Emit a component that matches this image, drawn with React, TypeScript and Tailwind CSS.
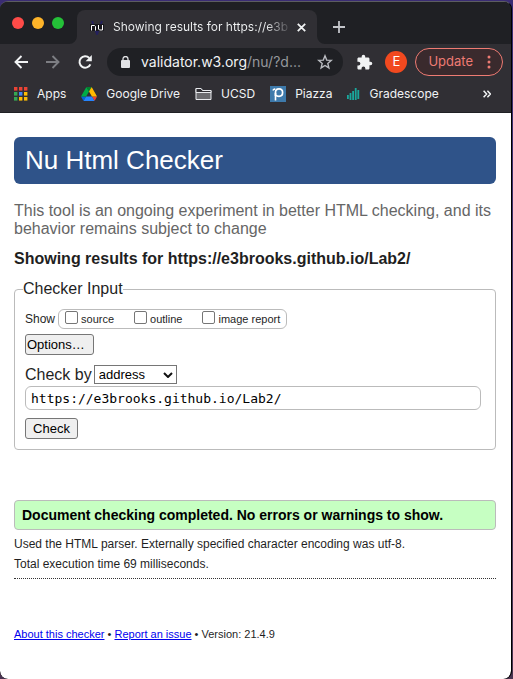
import React from "react";

const APP_COLORS = [
  "#ea4335", "#ea4335", "#ea4335",
  "#34a853", "#4285f4", "#fbbc04",
  "#34a853", "#fbbc04", "#fbbc04",
];

function AppsIcon() {
  return (
    <svg width="14" height="14" viewBox="0 0 14 14" aria-hidden="true">
      {APP_COLORS.map((color, i) => (
        <rect key={i} x={(i % 3) * 5} y={Math.floor(i / 3) * 5} width="3.400" height="3.600" fill={color} />
      ))}
    </svg>
  );
}

function DriveIcon() {
  return (
    <svg width="16" height="14" viewBox="0 0 87 78" aria-hidden="true">
      <path d="M6.6 66.9l3.9 6.6c.8 1.4 2 2.5 3.3 3.3L27.500 53H0c0 1.600.4 3.100 1.200 4.500z" fill="#0066da" />
      <path d="M43.700 25L29.900 1.200c-1.300.8-2.500 1.900-3.300 3.300L1.200 48.500A9 9 0 000 53h27.500z" fill="#00ac47" />
      <path d="M73.600 76.800c1.300-.8 2.500-1.900 3.300-3.300l9.100-15.900c.8-1.400 1.200-2.900 1.200-4.500H59.800l5.900 11.500z" fill="#ea4335" />
      <path d="M43.700 25L57.400 1.200C56.100.4 54.500 0 52.900 0H34.400c-1.600 0-3.200.4-4.500 1.200z" fill="#00832d" />
      <path d="M59.800 53H27.500L13.800 76.800c1.300.8 2.900 1.200 4.500 1.200h50.800c1.600 0 3.200-.4 4.500-1.200z" fill="#2684fc" />
      <path d="M73.400 26.500L60.700 4.500c-.8-1.400-2-2.500-3.300-3.300L43.700 25l16.100 28h27.400c0-1.600-.4-3.100-1.200-4.500z" fill="#ffba00" />
    </svg>
  );
}

function FolderIcon() {
  return (
    <svg width="17" height="14" viewBox="0 0 17 14" fill="none" stroke="#e8eaed" aria-hidden="true">
      <path d="M1 12.500V1.500h5l1.500 2H16v9z" fill="#6b6b6f" />
      <path d="M1 5.500V1.500h5l1.500 2H16v2z" fill="#302f34" />
    </svg>
  );
}

function PiazzaIcon() {
  return (
    <svg width="16" height="16" viewBox="0 0 16 16" fill="none" aria-hidden="true">
      <rect width="16" height="16" fill="#3e7aab" />
      <path d="M3 4.500c.3-1 1.200-1.600 2.200-1.200M5.500 7v7.500" stroke="#fff" strokeWidth="1.600" />
      <path d="M5.500 10V6.500C5.500 4 7 2.900 9 2.900s3.600 1.500 3.600 3.700S11.200 10.400 9 10.400c-1.500 0-2.700-.5-3.500-1.400" stroke="#fff" strokeWidth="1.700" />
    </svg>
  );
}

function GradescopeIcon() {
  return (
    <svg width="13" height="12" viewBox="0 0 13 12" fill="#1aa79c" aria-hidden="true">
      <rect x="0" y="7" width="1.800" height="4" />
      <rect x="2.600" y="5" width="1.800" height="7" />
      <rect x="5.200" y="3" width="1.800" height="9" />
      <rect x="7.800" y="0" width="1.800" height="12" />
      <rect x="10.400" y="2" width="1.800" height="9" />
    </svg>
  );
}

function NuIcon() {
  return (
    <svg width="16" height="16" viewBox="0 0 16 16" fill="none" aria-hidden="true">
      <path d="M3 2l5 13 5-13" stroke="#23205c" strokeWidth="2" />
      <rect x="1" y="5" width="14" height="7" fill="#17171d" />
      <path d="M2.500 11.500V6.500h3l1 1v4M9.500 6v4l1 1h3V6" stroke="#fff" strokeWidth="1" />
    </svg>
  );
}

function TabFoot({ flip }: { flip?: boolean }) {
  return (
    <svg width="8" height="8" viewBox="0 0 8 8" className={flip ? "-scale-x-100" : ""} aria-hidden="true">
      <path d="M8 0v8H0a8 8 0 008-8z" fill="#302f34" />
    </svg>
  );
}

function TabStrip() {
  return (
    <div className="flex h-[42px] items-end bg-[#1f2024] pl-3">
      <div className="mb-[15px] flex gap-2">
        <button aria-label="Close window" className="size-3 rounded-full bg-[#fe4b48]" />
        <button aria-label="Minimize window" className="size-3 rounded-full bg-[#feb429]" />
        <button aria-label="Zoom window" className="size-3 rounded-full bg-[#24c138]" />
      </div>
      <div className="ml-[5px] flex items-end">
        <TabFoot />
        <div className="flex h-[34px] w-[240px] items-center rounded-t-lg bg-[#302f34] pr-2 pl-3">
          <NuIcon />
          <span className="ml-2 flex-1 bg-linear-to-r from-[#f1f3f4] from-85% to-[#302f34] bg-clip-text text-xs whitespace-nowrap text-transparent">
            Showing results for https://e3b
          </span>
          <button aria-label="Close tab" className="flex size-4 items-center justify-center">
            <svg width="9" height="9" viewBox="0 0 9 9" stroke="#f1f3f4" strokeWidth="1.800" aria-hidden="true">
              <path d="M.8.8l7.400 7.400M8.200.8L.8 8.200" />
            </svg>
          </button>
        </div>
        <TabFoot flip />
      </div>
      <button aria-label="New tab" className="mb-[11px] ml-2 flex size-3 items-center justify-center">
        <svg width="12" height="12" viewBox="0 0 12 12" stroke="#c3c5ca" strokeWidth="1.800" aria-hidden="true">
          <path d="M6 0v12M0 6h12" />
        </svg>
      </button>
    </div>
  );
}

function Toolbar() {
  return (
    <div className="flex h-9 items-center pr-2 pl-[14px]">
      <button aria-label="Back">
        <svg width="14" height="14" viewBox="0 0 14 14" fill="none" stroke="#f1f3f4" strokeWidth="1.900" aria-hidden="true">
          <path d="M14 7H1.500M7.500 1L1.500 7l6 6" />
        </svg>
      </button>
      <button aria-label="Forward" className="ml-[18px]">
        <svg width="14" height="14" viewBox="0 0 14 14" fill="none" stroke="#7d7e83" strokeWidth="1.900" aria-hidden="true">
          <path d="M0 7h12.500M6.500 1l6 6-6 6" />
        </svg>
      </button>
      <button aria-label="Reload" className="ml-4">
        <svg width="18" height="18" viewBox="0 0 18 18" fill="none" aria-hidden="true">
          <path d="M14.400 11.300A5.700 5.700 0 1113.300 5" stroke="#f1f3f4" strokeWidth="2" />
          <path d="M15.800 2v6.200H9.600z" fill="#f1f3f4" />
        </svg>
      </button>
      <div className="ml-[13px] flex h-7 min-w-0 flex-1 items-center rounded-full bg-[#1f2024] pr-[10px] pl-[14px]">
        <svg width="9" height="12" viewBox="0 0 9 12" fill="none" aria-hidden="true">
          <rect x="0" y="4" width="9" height="8" rx="1" fill="#e2e3e6" />
          <path d="M2 5V3a2.500 2.500 0 015 0v2" stroke="#e2e3e6" strokeWidth="1.300" />
        </svg>
        <span className="ml-[11px] flex-1 text-sm whitespace-nowrap text-[#f1f3f4]">
          validator.w3.org<span className="text-[#96989d]">/nu/?d...</span>
        </span>
        <button aria-label="Bookmark this tab">
          <svg width="16" height="16" viewBox="0 0 16 16" fill="none" stroke="#b9bbc0" strokeWidth="1.400" aria-hidden="true">
            <path d="M8 1.800l1.700 4.300 4.600.3-3.500 3 1.100 4.500L8 11.500l-3.900 2.400 1.100-4.500-3.500-3 4.600-.3z" />
          </svg>
        </button>
      </div>
      <button aria-label="Extensions" className="ml-[13px]">
        <svg width="17" height="17" viewBox="0 0 24 24" fill="#f1f3f4" aria-hidden="true">
          <path d="M20.500 11H19V7c0-1.100-.9-2-2-2h-4V3.500a2.500 2.500 0 00-5 0V5H4c-1.100 0-2 .9-2 2v3.800h1.500a2.700 2.700 0 010 5.400H2V20c0 1.100.9 2 2 2h3.800v-1.500a2.700 2.700 0 015.400 0V22H17c1.100 0 2-.9 2-2v-4h1.500a2.500 2.500 0 000-5z" />
        </svg>
      </button>
      <button aria-label="Profile" className="ml-3 size-[22px] rounded-full bg-[#f1491f] text-[13px] text-white">
        E
      </button>
      <button className="ml-2 flex h-7 items-center rounded-full border border-[#ee7b73] bg-[#3a2a2d] pr-[11px] pl-3 text-[13px] text-[#ee7b73]">
        Update
        <svg width="4" height="14" viewBox="0 0 4 14" fill="#ee7b73" className="ml-[14px]" aria-hidden="true">
          <circle cx="2" cy="2" r="1.500" />
          <circle cx="2" cy="7" r="1.500" />
          <circle cx="2" cy="12" r="1.500" />
        </svg>
      </button>
    </div>
  );
}

function Bookmark({ icon, label }: { icon: React.ReactNode; label: string }) {
  return (
    <a href="#" className="flex items-center gap-[9px] whitespace-nowrap">
      {icon}
      {label}
    </a>
  );
}

function BookmarksBar() {
  return (
    <nav className="flex h-[33px] items-center gap-[15px] border-b border-[#1f2024] pr-5 pb-1 pl-[14px] text-xs text-[#f1f3f4]">
      <Bookmark icon={<AppsIcon />} label="Apps" />
      <Bookmark icon={<DriveIcon />} label="Google Drive" />
      <Bookmark icon={<FolderIcon />} label="UCSD" />
      <Bookmark icon={<PiazzaIcon />} label="Piazza" />
      <Bookmark icon={<GradescopeIcon />} label="Gradescope" />
      <button aria-label="More bookmarks" className="ml-auto">
        <svg width="8" height="8" viewBox="0 0 8 8" fill="none" stroke="#f1f3f4" strokeWidth="1.500" aria-hidden="true">
          <path d="M.6.8L3.600 4 .6 7.200M4.400.8L7.400 4l-3 3.200" />
        </svg>
      </button>
    </nav>
  );
}

function ShowOption({ label }: { label: string }) {
  return (
    <label className="flex items-center gap-[3px]">
      <input type="checkbox" className="mb-1 size-[13px] appearance-none rounded-xs border border-[#767676] bg-white" />
      {label}
    </label>
  );
}

function CheckerForm() {
  return (
    <form onSubmit={(event) => event.preventDefault()}>
      <fieldset className="mt-[11px] rounded-sm border border-[#bbbbbb] px-[10px] pb-[10px]">
        <legend className="-ml-[2px] text-base leading-5">Checker Input</legend>
        <div className="mt-[10px] flex items-center gap-[3px] text-xs">
          Show
          <div className="flex h-5 items-center gap-5 rounded-md border border-[#bbbbbb] px-[6px] text-[11px]">
            <ShowOption label="source" />
            <ShowOption label="outline" />
            <ShowOption label="image report" />
          </div>
        </div>
        <button type="button" className="mt-[5px] block h-[21px] w-[69px] rounded-[3px] border border-[#767676] bg-[#efefef] pl-px text-left text-[13px] leading-[19px] text-black">
          Options…
        </button>
        <div className="mt-[10px] flex items-center gap-[2px]">
          <label htmlFor="docselect" className="text-base leading-[18px]">Check by</label>
          <div className="grid">
            <select id="docselect" className="col-start-1 row-start-1 h-[19px] w-[83px] appearance-none border border-[#767676] bg-white pl-1 text-[13px] leading-[17px] text-black">
              <option>address</option>
            </select>
            <svg width="10" height="6" viewBox="0 0 10 6" fill="none" stroke="#111" strokeWidth="2" className="pointer-events-none col-start-1 row-start-1 mr-1 self-center justify-self-end" aria-hidden="true">
              <path d="M1 1l4 4 4-4" />
            </svg>
          </div>
        </div>
        <input
          type="url"
          aria-label="Address"
          defaultValue="https://e3brooks.github.io/Lab2/"
          className="mt-[2px] block h-6 w-[calc(100%-4px)] rounded-md border border-[#bbbbbb] px-[5px] font-['DejaVu_Sans_Mono',monospace] text-[13px] text-black"
        />
        <button type="submit" className="mt-2 block h-[21px] w-[53px] rounded-[3px] border border-[#767676] bg-[#efefef] text-[13px] leading-[19px] text-black">
          Check
        </button>
      </fieldset>
    </form>
  );
}

function CheckerPage() {
  return (
    <main className="flex-1 rounded-b-lg bg-white pt-6 pr-[15px] pl-[14px] font-['Liberation_Sans',Arial,sans-serif] text-[#1f1f1f]">
      <h1 className="rounded-md bg-[#2f5389] px-[11px] text-[26px] leading-[47px] text-white">Nu Html Checker</h1>
      <p className="mt-[18px] text-base leading-[18px] text-[#666666]">
        This tool is an ongoing experiment in better HTML checking, and its behavior remains subject to change
      </p>
      <h2 className="mt-3 text-base leading-[18px] font-bold">Showing results for https://e3brooks.github.io/Lab2/</h2>
      <CheckerForm />
      <p className="mt-[50px] rounded-sm border border-[#bbbbbb] bg-[#c6ffc2] px-[7px] text-[14px] leading-7 font-bold text-black">
        Document checking completed. No errors or warnings to show.
      </p>
      <div className="mt-1 border-b border-dotted border-[#333333] pb-1 text-xs leading-5">
        <p>Used the HTML parser. Externally specified character encoding was utf-8.</p>
        <p>Total execution time 69 milliseconds.</p>
      </div>
      <footer className="mt-[45px] text-[11px] leading-5">
        <a href="#" className="text-[#0000ee] underline">About this checker</a>
        {" • "}
        <a href="#" className="text-[#0000ee] underline">Report an issue</a>
        {" • Version: 21.4.9"}
      </footer>
    </main>
  );
}

export default function App() {
  return (
    <div className="flex min-h-screen flex-col bg-[#3b2c6b] bg-linear-to-b from-[#3a2c74] to-[#4a3350] pt-px pr-px font-[Inter,sans-serif]">
      <div className="flex flex-1 flex-col overflow-hidden rounded-t-lg rounded-b-lg border-t border-r border-t-[#5c5d61] border-r-black bg-black">
        <header className="bg-[#302f34]">
          <TabStrip />
          <Toolbar />
          <BookmarksBar />
        </header>
        <CheckerPage />
      </div>
    </div>
  );
}
